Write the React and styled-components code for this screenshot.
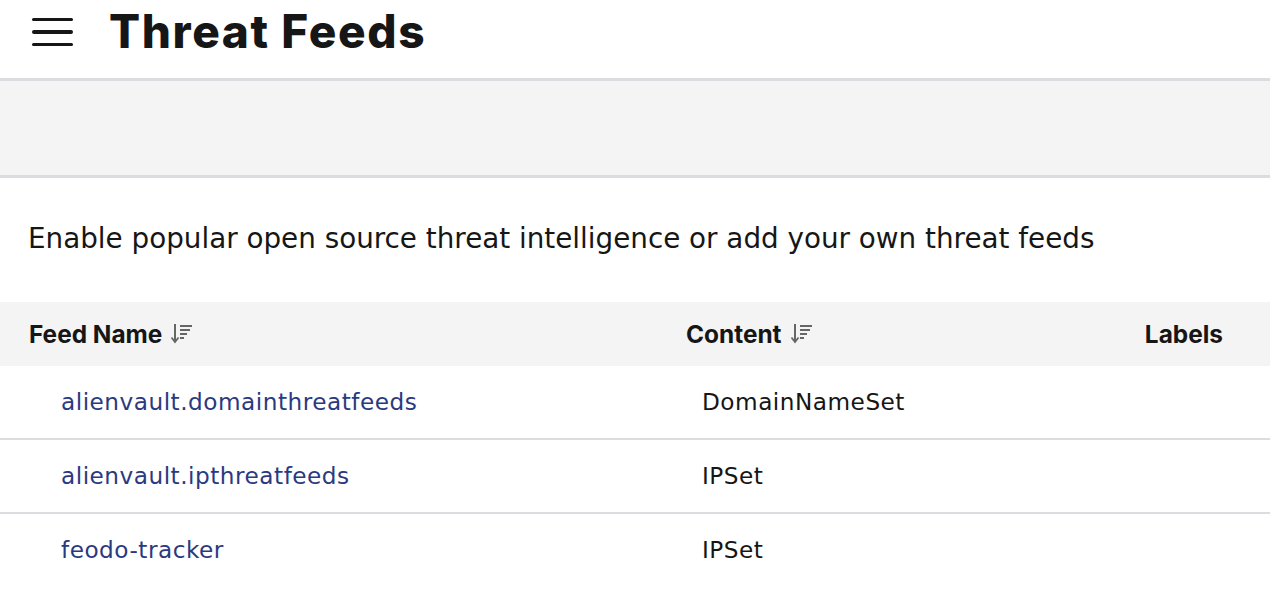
import styled, { createGlobalStyle } from "styled-components";

const GlobalStyle = createGlobalStyle`
  body {
    margin: 0;
    background: #fff;
    font-family: Inter, "Liberation Sans", sans-serif;
    color: #161616;
  }
`;

const TopBar = styled.header`
  display: flex;
  align-items: center;
  gap: 36px;
  height: 78px;
  padding: 0 32px;
  border-bottom: 3px solid #dcdce0;
  box-sizing: content-box;
`;

const MenuButton = styled.button`
  border: 0;
  background: none;
  padding: 0;
  width: 41px;
  height: 41px;
  display: flex;
  flex-direction: column;
  justify-content: center;
  gap: 9px;
  cursor: pointer;
  margin-top: -14px;

  span {
    display: block;
    height: 3.5px;
    border-radius: 2px;
    background: #161616;
  }
`;

const Title = styled.h1`
  margin: 0 0 16px;
  font-family: Inter, sans-serif;
  font-weight: 800;
  font-size: 46px;
  letter-spacing: 1.6px;
  color: #161616;
`;

const Toolbar = styled.div`
  height: 94px;
  background: #f4f4f4;
  border-bottom: 3px solid #dcdce0;
`;

const Intro = styled.p`
  margin: 0;
  padding: 44px 28px 0;
  height: 80px;
  font-family: "DejaVu Sans", sans-serif;
  font-size: 27.8px;
  color: #161616;
`;

const Table = styled.div`
  display: grid;
  grid-template-columns: 657px 1fr auto;
`;

const HeadCell = styled.div`
  display: flex;
  align-items: center;
  gap: 8px;
  height: 64px;
  background: #f4f4f4;
  padding: ${(p) => (p.$right ? "0 47px 0 0" : "0 0 0 29px")};
  justify-content: ${(p) => (p.$right ? "flex-end" : "flex-start")};
  font-weight: 700;
  font-size: 24.4px;
  color: #161616;
`;

const Cell = styled.div`
  display: flex;
  align-items: center;
  box-sizing: border-box;
  height: 74px;
  padding-left: ${(p) => (p.$first ? "61px" : "45px")};
  padding-bottom: 1px;
  border-bottom: 2px solid ${(p) => (p.$last ? "transparent" : "#dcdce0")};
  font-family: "DejaVu Sans", sans-serif;
  font-size: 23.2px;
  letter-spacing: 0.5px;
  color: #161616;
`;

const FeedLink = styled.a`
  color: #2b3a80;
  text-decoration: none;
`;

const SortIcon = () => (
  <svg width="24" height="24" viewBox="0 0 24 24" fill="none">
    <path d="M5 2v17" stroke="#666" strokeWidth="2" />
    <path d="M1.5 15.5L5 20l3.5-4.5" stroke="#666" strokeWidth="1.8" fill="none" />
    <path d="M10 4h12M10 8h10M10 12h7M10 16h4" stroke="#666" strokeWidth="2" />
  </svg>
);

const feeds = [
  { name: "alienvault.domainthreatfeeds", content: "DomainNameSet" },
  { name: "alienvault.ipthreatfeeds", content: "IPSet" },
  { name: "feodo-tracker", content: "IPSet" },
];

export default function App() {
  return (
    <>
      <GlobalStyle />
      <TopBar>
        <MenuButton aria-label="Menu">
          <span />
          <span />
          <span />
        </MenuButton>
        <Title>Threat Feeds</Title>
      </TopBar>
      <Toolbar />
      <Intro>Enable popular open source threat intelligence or add your own threat feeds</Intro>
      <Table>
        <HeadCell>
          Feed Name <SortIcon />
        </HeadCell>
        <HeadCell>
          Content <SortIcon />
        </HeadCell>
        <HeadCell $right>Labels</HeadCell>
        {feeds.map((f, i) => {
          const last = i === feeds.length - 1;
          return [
            <Cell $first $last={last} key={f.name + "-name"}>
              <FeedLink href="#">{f.name}</FeedLink>
            </Cell>,
            <Cell $last={last} key={f.name + "-content"}>
              {f.content}
            </Cell>,
            <Cell $last={last} key={f.name + "-labels"} />,
          ];
        })}
      </Table>
    </>
  );
}
